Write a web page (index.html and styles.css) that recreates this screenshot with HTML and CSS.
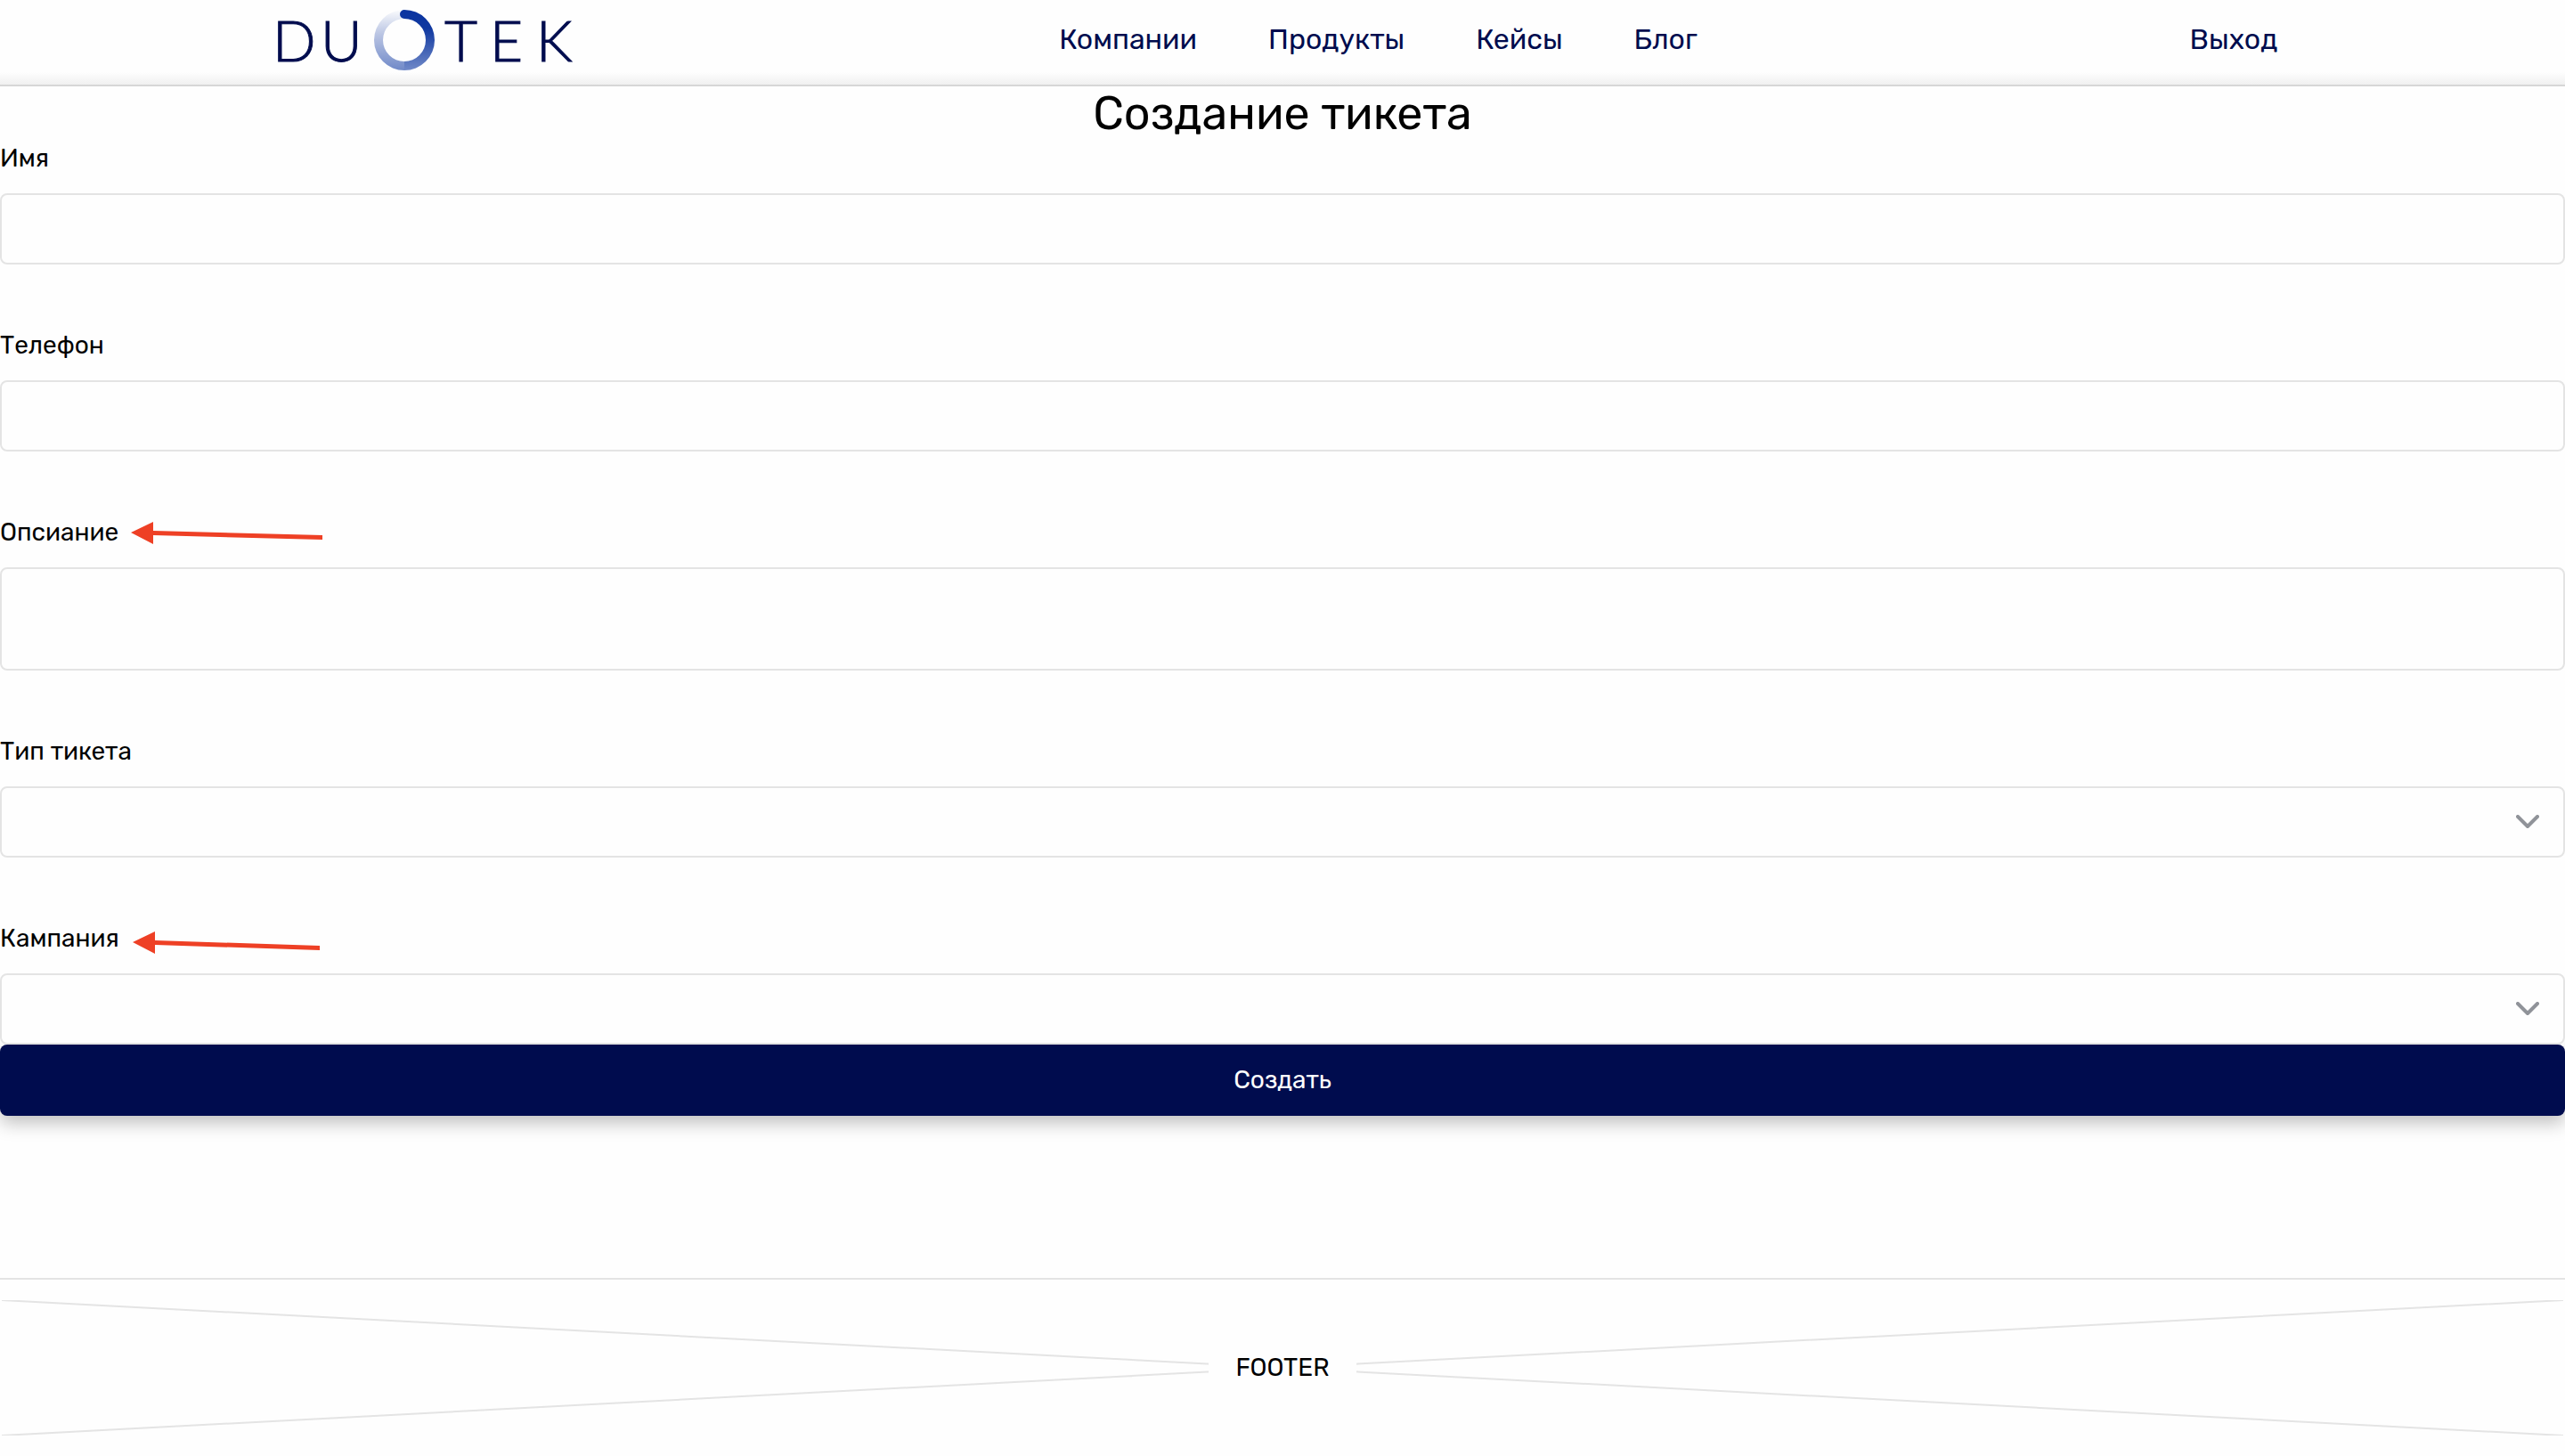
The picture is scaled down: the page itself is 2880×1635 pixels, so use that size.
FILE: index.html
```html
<!DOCTYPE html>
<html lang="ru">
<head>
  <meta charset="utf-8">
  <meta name="viewport" content="width=device-width, initial-scale=1">
  <title>Создание тикета</title>
  <link rel="stylesheet" href="styles.css">
</head>
<body>
  <header class="header">
    <a class="logo" href="#" aria-label="DUOTEK">
      <svg class="logo-image" viewBox="-6 0 346 88" width="346" height="88">
        <defs>
          <linearGradient id="ring-right" x1="0" y1="0" x2="0" y2="1">
            <stop offset="0" stop-color="#0a34a0"/>
            <stop offset="0.3" stop-color="#0f38a0"/>
            <stop offset="1" stop-color="#7089c8"/>
          </linearGradient>
          <linearGradient id="ring-left" x1="0" y1="1" x2="0" y2="0">
            <stop offset="0" stop-color="#7089c8"/>
            <stop offset="0.6" stop-color="#bac5e3"/>
            <stop offset="1" stop-color="#fafbfd"/>
          </linearGradient>
        </defs>
        <text class="logo-text" y="69" x="-2 52 191 242 294">DUTEK</text>
        <path d="M146 79A34 34 0 0 1 146 11V21A24 24 0 0 0 146 69Z" fill="url(#ring-left)"/>
        <path d="M146 11A34 34 0 0 1 146 79V69A24 24 0 0 0 146 21A5 5 0 0 1 146 11Z" fill="url(#ring-right)"/>
      </svg>
    </a>
    <nav class="nav">
      <a class="link" href="#">Компании</a>
      <a class="link" href="#">Продукты</a>
      <a class="link" href="#">Кейсы</a>
      <a class="link" href="#">Блог</a>
    </nav>
    <a class="link link-exit" href="#">Выход</a>
  </header>

  <main class="main">
    <h1 class="title">Создание тикета</h1>
    <form class="form">
      <div class="field">
        <label class="label" for="name">Имя</label>
        <input class="control" id="name" type="text">
      </div>
      <div class="field">
        <label class="label" for="phone">Телефон</label>
        <input class="control" id="phone" type="tel">
      </div>
      <div class="field">
        <label class="label" for="description">Опсиание</label>
        <textarea class="control control-area" id="description"></textarea>
        <svg class="arrow" viewBox="0 0 216 32" width="216" height="32" aria-hidden="true">
          <path d="M0 12L25 0V10L215 15V20L25 15V25Z"/>
        </svg>
      </div>
      <div class="field">
        <label class="label" for="type">Тип тикета</label>
        <div class="select">
          <select class="control" id="type"><option></option></select>
          <svg class="chevron" viewBox="0 0 26 16" width="26" height="16" aria-hidden="true"><path d="M2 2L13 13L24 2"/></svg>
        </div>
      </div>
      <div class="field">
        <label class="label" for="campaign">Кампания</label>
        <div class="select">
          <select class="control" id="campaign"><option></option></select>
          <svg class="chevron" viewBox="0 0 26 16" width="26" height="16" aria-hidden="true"><path d="M2 2L13 13L24 2"/></svg>
        </div>
        <svg class="arrow" viewBox="0 0 216 32" width="216" height="32" aria-hidden="true">
          <path d="M2 16L27 4V14L212 20V25L27 19V29Z"/>
        </svg>
      </div>
      <button class="submit" type="submit">Создать</button>
    </form>
  </main>

  <footer class="footer">
    <svg class="footer-cross" viewBox="0 0 100 100" preserveAspectRatio="none" aria-hidden="true">
      <path d="M0 0L100 100M0 100L100 0"/>
    </svg>
    <span class="footer-text">FOOTER</span>
  </footer>
</body>
</html>
```

FILE: styles.css
```css
*,
*::before,
*::after {
  box-sizing: border-box;
}

body {
  display: flex;
  flex-direction: column;
  min-height: 100vh;
  margin: 0;
  background: #fefefe;
  color: #000;
  font: 400 28px/34px Rubik, Roboto, sans-serif;
}

.header {
  display: flex;
  align-items: center;
  justify-content: space-between;
  padding: 0 11.2% 7px 10.5%;
  border-bottom: 2px solid #d6d6d6;
  background: linear-gradient(to top, #f0f0f0, #fefefe 14px);
}

.logo {
  display: flex;
}

.logo-image {
  display: block;
  overflow: visible;
}

.logo-text {
  fill: #000c4e;
  stroke: #000c4e;
  stroke-width: 1;
  font: 300 64px Lato, sans-serif;
}

.nav {
  display: flex;
  gap: 80px;
}

.link {
  color: #000c4e;
  font-size: 32px;
  line-height: 38px;
  text-decoration: none;
}

.link-exit {
  padding-left: 12px;
}

.main {
  flex: 1;
}

.title {
  margin: 0;
  font-size: 52px;
  font-weight: 400;
  line-height: 60px;
  text-align: center;
}

.form {
  display: flex;
  flex-direction: column;
}

.field {
  position: relative;
  display: flex;
  flex-direction: column;
  gap: 18px;
}

.field + .field {
  margin-top: 70px;
}

.label {
  align-self: flex-start;
  line-height: 42px;
}

.control {
  display: block;
  width: 100%;
  height: 80px;
  margin: 0;
  padding: 0 32px;
  border: 2px solid #e4e4e4;
  border-radius: 8px;
  outline: 0;
  background: #fefefe;
  font: inherit;
  appearance: none;
}

.control-area {
  height: 116px;
  padding: 24px 32px;
  resize: none;
}

.select {
  position: relative;
}

.chevron {
  position: absolute;
  top: 32px;
  right: 29px;
  fill: none;
  stroke: #909399;
  stroke-width: 4;
  stroke-linecap: round;
  stroke-linejoin: round;
  pointer-events: none;
}

.arrow {
  position: absolute;
  top: 9px;
  left: 147px;
  fill: #ee4025;
}

.submit {
  height: 80px;
  border: 0;
  border-radius: 8px;
  background: #000c4e;
  box-shadow: 0 8px 20px rgba(0, 0, 0, 0.25);
  color: #fefefe;
  font: inherit;
}

.footer {
  position: relative;
  display: flex;
  align-items: center;
  justify-content: center;
  height: 200px;
  border-top: 2px solid #e4e4e4;
}

.footer-cross {
  position: absolute;
  inset: 23px 2px;
  width: calc(100% - 4px);
  height: 152px;
  fill: none;
  stroke: #e4e4e4;
}

.footer-cross path {
  stroke-width: 2;
  vector-effect: non-scaling-stroke;
}

.footer-text {
  position: relative;
  padding: 16px 30px;
  background: #fefefe;
}
```
